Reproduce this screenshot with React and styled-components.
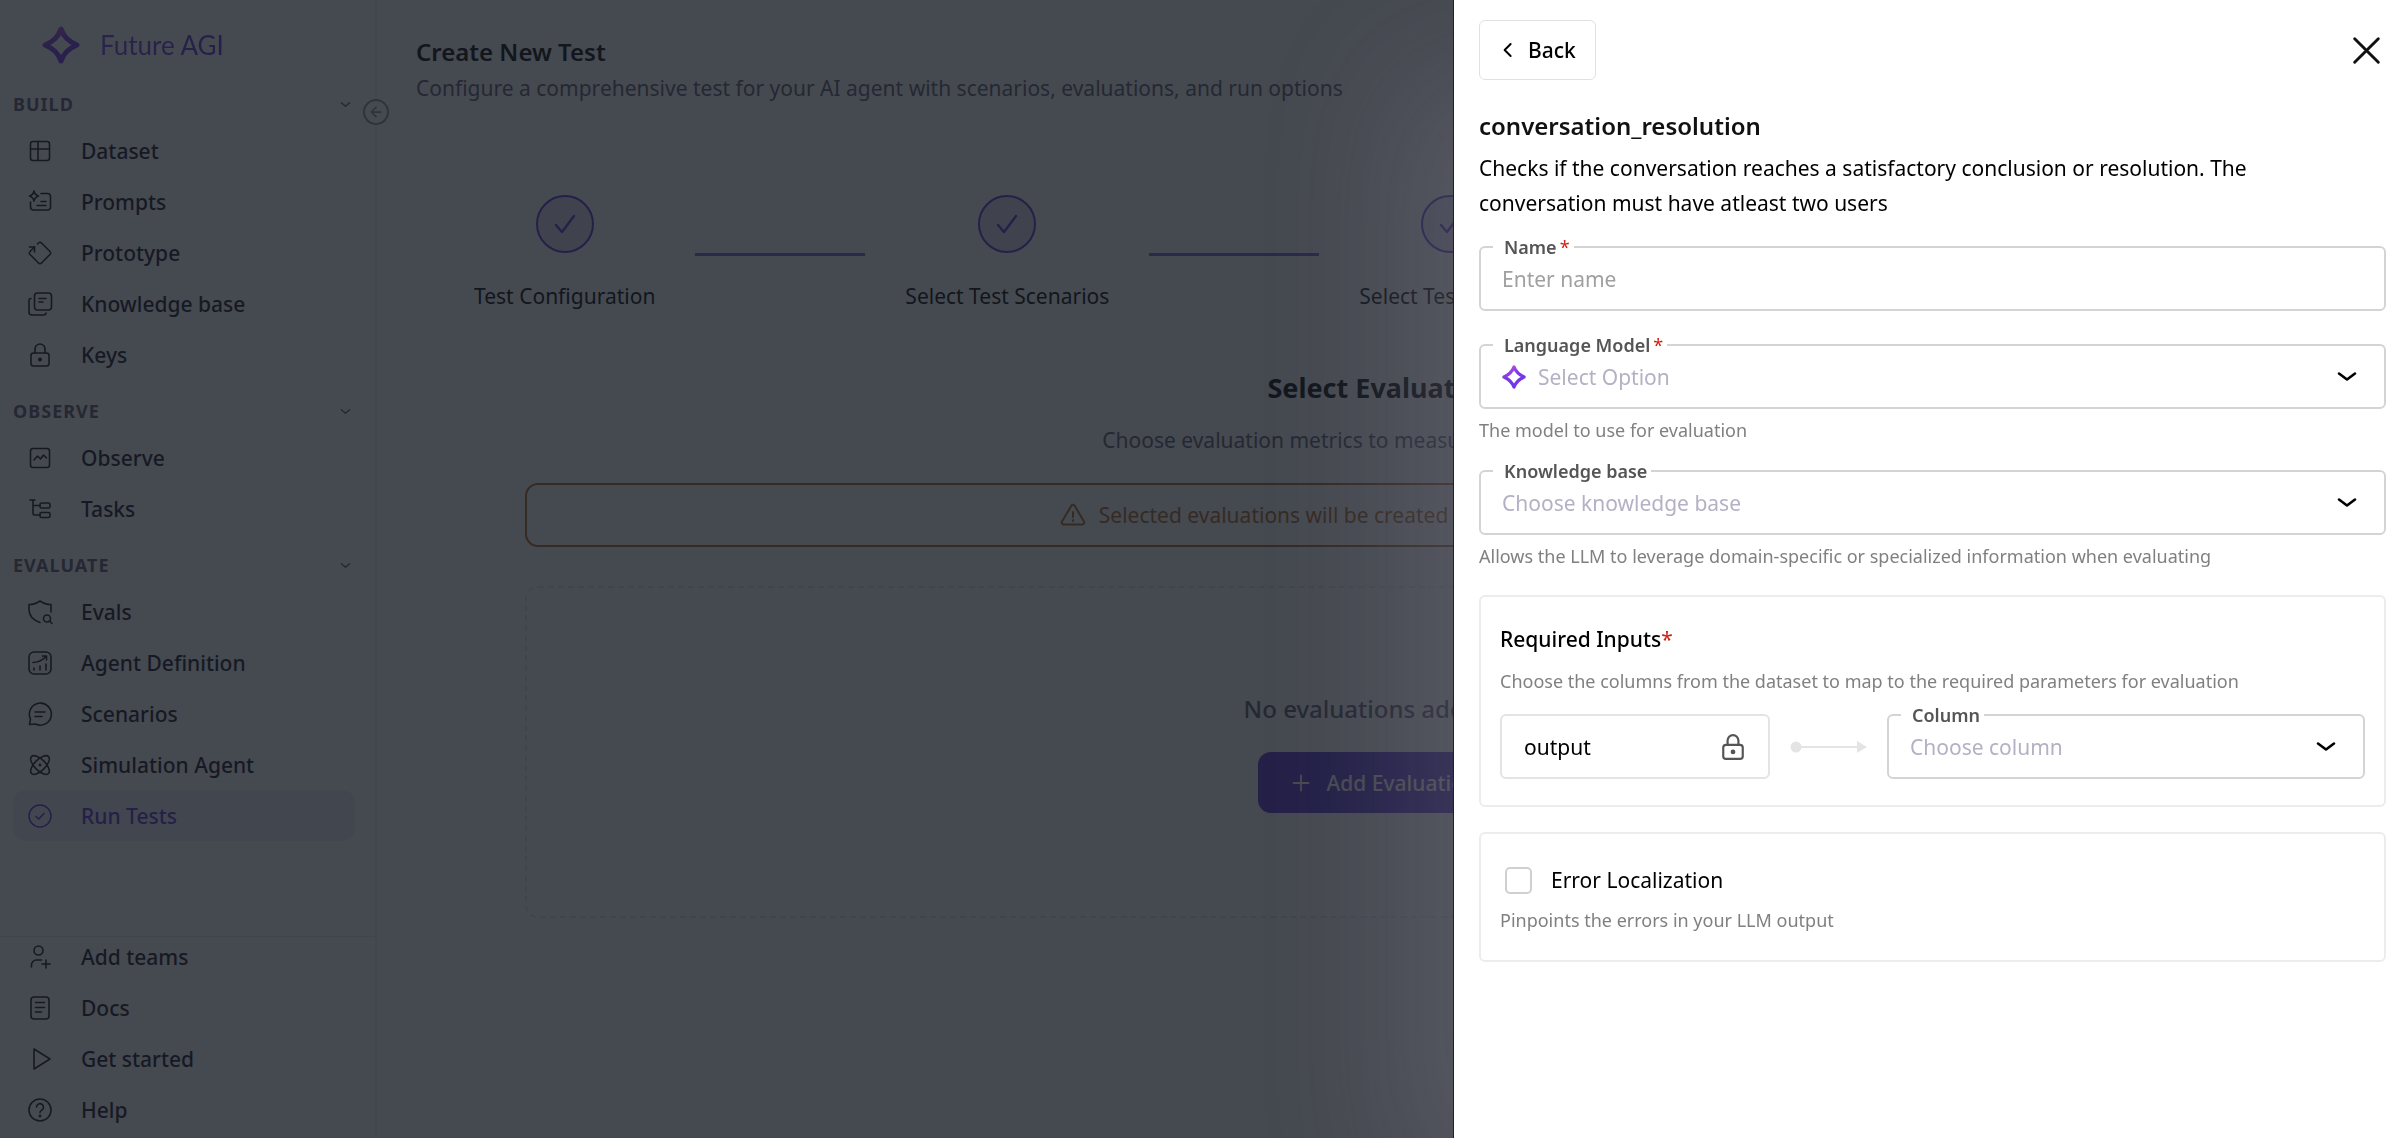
import React, { useState } from "react";
import styled, { createGlobalStyle } from "styled-components";

const icons = {
  dataset: (
    <>
      <rect x="2.5" y="2.5" width="19" height="19" rx="2.5" />
      <path d="M2.5 10h19M10 2.5v19" />
    </>
  ),
  prompts: (
    <>
      <path d="M13 3.5h6.5a3 3 0 0 1 3 3V17a3 3 0 0 1-3 3h-14a3 3 0 0 1-3-3v-5" />
      <path d="M6 1c.5 3 1.500 4 4.500 5-3 1-4 2-4.500 5C5.500 8 4.500 7 1.500 6 4.500 5 5.500 4 6 1Z" />
      <path d="M13 11.500h5M9 15.500h9" />
    </>
  ),
  prototype: (
    <>
      <path d="M9.500 3 10.500 2a2 2 0 0 1 3 0l8.500 8.500a2 2 0 0 1 0 3L13.500 22a2 2 0 0 1-3 0L2 13.500a2 2 0 0 1 0-3L6.500 6" />
      <path d="M1.500 6h5v5" />
    </>
  ),
  knowledge: (
    <>
      <rect x="6.500" y="1" width="17" height="17" rx="3" />
      <path d="M3 6.500c-1.500 0-2 .8-2 2V20a3 3 0 0 0 3 3h11.500c1.500 0 2.500-.8 2.500-2" />
      <path d="M11 6.500h7M11 10h4" />
    </>
  ),
  lock: (
    <>
      <rect x="3" y="10" width="18" height="13" rx="2.500" />
      <path d="M7 10V6a5 5 0 0 1 10 0v4" />
      <circle cx="12" cy="16.500" r="1.200" fill="currentColor" />
    </>
  ),
  observe: (
    <>
      <rect x="2.500" y="2.500" width="19" height="19" rx="2.500" />
      <path d="m6 14 3.500-4 3 3 3-4 3 3" />
    </>
  ),
  tasks: (
    <>
      <path d="M2 3h5M5 3v13.500a1.500 1.500 0 0 0 1.500 1.500H12M5 8.500h7" />
      <rect x="12" y="6" width="10" height="5" rx="1.500" />
      <rect x="12" y="15.500" width="10" height="5" rx="1.500" />
    </>
  ),
  evals: (
    <>
      <path d="M12 22.500C5 20 1 15.500 1 9.500V4.500c4 0 7.500-1 11-3.500 3.500 2.500 7 3.500 11 3.500V12" />
      <circle cx="19" cy="18.500" r="3.500" />
      <path d="m21.500 21 2.500 2.500" />
    </>
  ),
  agent: (
    <>
      <rect x="1" y="1" width="22" height="22" rx="5" />
      <path d="M5 11.500c5 0 9-2 13-6M14.500 5h4v4M6 17v2M12 15v4M18 13v6" />
    </>
  ),
  scenarios: (
    <>
      <path d="M1.500 22.500 2.500 17A11 11 0 1 1 7.500 22Z" />
      <path d="M7 10h10M7 14.500h7" />
    </>
  ),
  atom: (
    <>
      <ellipse cx="12" cy="12" rx="12" ry="5.500" transform="rotate(45 12 12)" />
      <ellipse cx="12" cy="12" rx="12" ry="5.500" transform="rotate(-45 12 12)" />
      <circle cx="12" cy="12" r=".6" fill="currentColor" />
    </>
  ),
  check: (
    <>
      <circle cx="12" cy="12" r="11" />
      <path d="m8 12.500 2.800 2.500L16 9.500" />
    </>
  ),
  team: (
    <>
      <circle cx="10.500" cy="5.500" r="4.500" />
      <path d="M3.500 22v-2a5 5 0 0 1 5-5h5M18 15v8M14 19h8" />
    </>
  ),
  docs: (
    <>
      <rect x="3" y="1" width="18" height="22" rx="3" />
      <path d="M7.500 6.500h9M7.500 11.500h9M7.500 16h6" />
    </>
  ),
  play: <path d="M6 2v20l16-10Z" />,
  help: (
    <>
      <circle cx="12" cy="12" r="11" />
      <path d="M8.500 9a3.500 3.500 0 1 1 5.500 3c-1.200.8-2 1.200-2 2.500" />
      <circle cx="12" cy="18" r=".6" fill="currentColor" />
    </>
  ),
  arrowLeft: <path d="M20 12H5M12 4l-8 8 8 8" />,
  caret: <path d="m3 8 9 8 9-8" />,
  chevronDown: <path d="m4 8.500 8 6 8-6" />,
  chevronLeft: <path d="m15.500 4-8 8 8 8" />,
  tick: <path d="m3 13 6 7L21 4" />,
  plus: <path d="M12 2v20M2 12h20" />,
  close: <path d="m1.500 1.500 21 21M22.500 1.500l-21 21" />,
  warning: (
    <>
      <path d="M10.500 2.500a2 2 0 0 1 3 0l9.500 16a2 2 0 0 1-1.500 3h-19a2 2 0 0 1-1.500-3Z" />
      <path d="M12 9v5M12 17v1" />
    </>
  ),
};

function Icon({ name, size = 24, weight = 2 }) {
  return (
    <svg
      width={size}
      height={size}
      viewBox="0 0 24 24"
      fill="none"
      stroke="currentColor"
      strokeWidth={weight}
      strokeLinecap="round"
      strokeLinejoin="round"
      overflow="visible"
      aria-hidden="true"
    >
      {icons[name]}
    </svg>
  );
}

function Spark({ size, id }) {
  return (
    <svg width={size} height={size} viewBox="0 0 38 38" fill="none" aria-hidden="true">
      <defs>
        <linearGradient id={id} x1="8" y1="0" x2="24" y2="38" gradientUnits="userSpaceOnUse">
          <stop offset="0" stopColor="#c056d8" />
          <stop offset=".45" stopColor="#7a38e8" />
          <stop offset="1" stopColor="#6f35ee" />
        </linearGradient>
      </defs>
      <path
        d="M19 3c3 8 7 12 16 16-9 4-13 8-16 16-3-8-7-12-16-16 9-4 13-8 16-16Z"
        stroke={`url(#${id})`}
        strokeWidth="5"
        strokeLinejoin="round"
      />
    </svg>
  );
}

const sections = [
  {
    title: "BUILD",
    items: [
      ["dataset", "Dataset"],
      ["prompts", "Prompts"],
      ["prototype", "Prototype"],
      ["knowledge", "Knowledge base"],
      ["lock", "Keys"],
    ],
  },
  {
    title: "OBSERVE",
    items: [
      ["observe", "Observe"],
      ["tasks", "Tasks"],
    ],
  },
  {
    title: "EVALUATE",
    items: [
      ["evals", "Evals"],
      ["agent", "Agent Definition"],
      ["scenarios", "Scenarios"],
      ["atom", "Simulation Agent"],
      ["check", "Run Tests"],
    ],
  },
];

const footerItems = [
  ["team", "Add teams"],
  ["docs", "Docs"],
  ["play", "Get started"],
  ["help", "Help"],
];

const steps = [
  "Test Configuration",
  "Select Test Scenarios",
  "Select Test Metrics",
  "Summary",
];

function Sidebar() {
  return (
    <StyledSidebar>
      <StyledLogo>
        <Spark size={38} id="logo" />
        <StyledLogoText>Future AGI</StyledLogoText>
      </StyledLogo>
      <StyledCollapse type="button" aria-label="Collapse sidebar">
        <Icon name="arrowLeft" size={14} weight={3} />
      </StyledCollapse>
      <nav>
        {sections.map((section) => (
          <div key={section.title}>
            <StyledSection type="button">
              {section.title}
              <Icon name="caret" size={11} weight={3} />
            </StyledSection>
            {section.items.map(([icon, label]) => (
              <StyledNavItem href="#" key={label} $active={label === "Run Tests"}>
                <Icon name={icon} weight={icon === "check" ? 1.5 : 1.6} />
                {label}
              </StyledNavItem>
            ))}
          </div>
        ))}
      </nav>
      <StyledSidebarFooter>
        {footerItems.map(([icon, label]) => (
          <StyledFooterItem href="#" key={label}>
            <Icon name={icon} weight={1.6} />
            {label}
          </StyledFooterItem>
        ))}
      </StyledSidebarFooter>
    </StyledSidebar>
  );
}

function TestPage() {
  return (
    <StyledMain>
      <StyledPageTitle>Create New Test</StyledPageTitle>
      <StyledPageText>
        Configure a comprehensive test for your AI agent with scenarios,
        evaluations, and run options
      </StyledPageText>
      <StyledStepper>
        {steps.map((step, index) => (
          <React.Fragment key={step}>
            {index > 0 && <StyledStepLine />}
            <StyledStep>
              <StyledStepCircle>
                <Icon name="tick" weight={2.4} />
              </StyledStepCircle>
              {step}
            </StyledStep>
          </React.Fragment>
        ))}
      </StyledStepper>
      <StyledEvaluations>
        <StyledEvalTitle>Select Evaluations</StyledEvalTitle>
        <StyledPageText>
          Choose evaluation metrics to measure agent performance
        </StyledPageText>
        <StyledAlert>
          <Icon name="warning" />
          Selected evaluations will be created and added to your test run
        </StyledAlert>
        <StyledEmpty>
          <StyledEmptyText>No evaluations added yet</StyledEmptyText>
          <StyledAddButton type="button">
            <Icon name="plus" size={18} weight={2.4} />
            Add Evaluations
          </StyledAddButton>
        </StyledEmpty>
      </StyledEvaluations>
    </StyledMain>
  );
}

function SelectField({ id, label, placeholder, required, icon }) {
  return (
    <StyledField>
      <StyledLegend>
        <label htmlFor={id}>{label}</label>
        {required && <StyledStar>*</StyledStar>}
      </StyledLegend>
      <StyledControl>
        {icon}
        <StyledSelect id={id} defaultValue="">
          <option value="">{placeholder}</option>
        </StyledSelect>
        <Icon name="chevronDown" size={24} weight={2.6} />
      </StyledControl>
    </StyledField>
  );
}

function EvaluationDrawer() {
  const [name, setName] = useState("");
  const [localize, setLocalize] = useState(false);

  return (
    <StyledDrawer>
      <StyledDrawerHeader>
        <StyledBack type="button">
          <Icon name="chevronLeft" size={18} weight={2.6} />
          Back
        </StyledBack>
        <StyledClose type="button" aria-label="Close">
          <Icon name="close" size={27} weight={2.6} />
        </StyledClose>
      </StyledDrawerHeader>
      <StyledDrawerTitle>conversation_resolution</StyledDrawerTitle>
      <StyledDescription>
        Checks if the conversation reaches a satisfactory conclusion or
        resolution. The conversation must have atleast two users
      </StyledDescription>
      <StyledField>
        <StyledLegend>
          <label htmlFor="name">Name</label>
          <StyledStar>*</StyledStar>
        </StyledLegend>
        <StyledControl>
          <StyledInput
            id="name"
            type="text"
            placeholder="Enter name"
            value={name}
            onChange={(e) => setName(e.target.value)}
          />
        </StyledControl>
      </StyledField>
      <StyledGap />
      <SelectField
        id="model"
        label="Language Model"
        placeholder="Select Option"
        required
        icon={<Spark size={24} id="model-spark" />}
      />
      <StyledHelper>The model to use for evaluation</StyledHelper>
      <StyledGap $small />
      <SelectField
        id="knowledge"
        label="Knowledge base"
        placeholder="Choose knowledge base"
      />
      <StyledHelper>
        Allows the LLM to leverage domain-specific or specialized information
        when evaluating
      </StyledHelper>
      <StyledCard>
        <StyledCardTitle>
          Required Inputs<StyledTitleStar>*</StyledTitleStar>
        </StyledCardTitle>
        <StyledCardText>
          Choose the columns from the dataset to map to the required parameters
          for evaluation
        </StyledCardText>
        <StyledMapping>
          <StyledOutput>
            <StyledInput aria-label="Parameter" value="output" readOnly />
            <Icon name="lock" size={26} />
          </StyledOutput>
          <StyledConnector width="77" height="12" viewBox="0 0 77 12" aria-hidden="true">
            <circle cx="6" cy="6" r="5.500" />
            <path d="M6 5h62v2H6z" />
            <path d="m67 0 10 6-10 6z" />
          </StyledConnector>
          <SelectField id="column" label="Column" placeholder="Choose column" />
        </StyledMapping>
      </StyledCard>
      <StyledCard>
        <StyledCheckLabel>
          <StyledCheckbox
            type="checkbox"
            checked={localize}
            onChange={(e) => setLocalize(e.target.checked)}
          />
          Error Localization
        </StyledCheckLabel>
        <StyledCheckText>Pinpoints the errors in your LLM output</StyledCheckText>
      </StyledCard>
    </StyledDrawer>
  );
}

export default function App() {
  return (
    <StyledApp>
      <GlobalStyle />
      <Sidebar />
      <TestPage />
      <StyledBackdrop />
      <EvaluationDrawer />
    </StyledApp>
  );
}

const GlobalStyle = createGlobalStyle`
  * {
    box-sizing: border-box;
  }
  body {
    margin: 0;
    background: #fff;
    color: #000;
    font-family: "Noto Sans", sans-serif;
    font-size: 21px;
    line-height: 32px;
  }
  button, input, select {
    font: inherit;
    color: inherit;
  }
  h1, h2, h3, p {
    margin: 0;
  }
  svg {
    flex: none;
  }
`;
const StyledApp = styled.div`
  display: flex;
  min-height: 100vh;
  overflow: hidden;
`;
const StyledSidebar = styled.aside`
  position: relative;
  display: flex;
  flex-direction: column;
  flex: none;
  width: 377px;
  border-right: 2px solid #f0f0f3;
`;
const StyledLogo = styled.div`
  display: flex;
  align-items: center;
  gap: 20px;
  height: 73px;
  padding: 17px 0 0 42px;
`;
const StyledLogoText = styled.span`
  font-family: Lato, sans-serif;
  font-size: 26px;
  background: linear-gradient(90deg, #7a45e5, #5a35dd);
  background-clip: text;
  color: transparent;
`;
const StyledCollapse = styled.button`
  position: absolute;
  top: 99px;
  right: -14px;
  display: flex;
  align-items: center;
  justify-content: center;
  width: 26px;
  height: 26px;
  padding: 0;
  border: 2px solid #938fa3;
  border-radius: 50%;
  background: #fff;
  color: #938fa3;
`;
const StyledSection = styled.button`
  display: flex;
  align-items: center;
  justify-content: space-between;
  width: 100%;
  height: 52px;
  padding: 10px 24px 0 13px;
  border: none;
  background: none;
  color: #605c70;
  font-size: 18px;
  font-weight: 700;
  letter-spacing: 1px;
`;
const StyledNavItem = styled.a`
  display: flex;
  align-items: center;
  gap: 29px;
  height: 51px;
  margin: 0 20px 0 13px;
  padding-left: 15px;
  border-radius: 13px;
  background: ${(props) => (props.$active ? "#f0eff6" : "none")};
  color: ${(props) => (props.$active ? "#5a35d5" : "#17131f")};
  font-weight: 500;
  text-decoration: none;
`;
const StyledSidebarFooter = styled.div`
  display: flex;
  flex-direction: column;
  gap: 11px;
  margin-top: auto;
  padding-bottom: 8px;
  border-top: 1px solid #e6e6ea;
`;
const StyledFooterItem = styled(StyledNavItem)`
  height: 40px;
`;
const StyledMain = styled.main`
  flex: 1;
  padding: 36px 39px;
`;
const StyledPageTitle = styled.h1`
  font-size: 24px;
  font-weight: 600;
  line-height: 32px;
`;
const StyledPageText = styled.p`
  margin-top: 4px;
  color: #605c70;
`;
const StyledStepper = styled.div`
  display: flex;
  align-items: flex-start;
  gap: 40px;
  margin-top: 91px;
  padding-left: 58px;
`;
const StyledStep = styled.div`
  display: flex;
  flex-direction: column;
  align-items: center;
  gap: 27px;
  white-space: nowrap;
`;
const StyledStepCircle = styled.div`
  display: flex;
  align-items: center;
  justify-content: center;
  width: 58px;
  height: 58px;
  border: 2px solid #5a35d5;
  border-radius: 50%;
  background: #e4dff5;
  color: #5a35d5;
`;
const StyledStepLine = styled.div`
  width: 170px;
  height: 3px;
  margin-top: 58px;
  background: #7a5fe0;
`;
const StyledEvaluations = styled.section`
  display: flex;
  flex-direction: column;
  align-items: center;
  max-width: 1730px;
  margin: 56px auto 0;
`;
const StyledEvalTitle = styled.h2`
  margin-bottom: 12px;
  font-size: 27px;
  font-weight: 700;
  line-height: 40px;
`;
const StyledAlert = styled.div`
  display: flex;
  align-items: center;
  justify-content: center;
  gap: 14px;
  width: 100%;
  height: 64px;
  margin-top: 27px;
  border: 2px solid #b06820;
  border-radius: 13px;
  color: #b06820;
`;
const StyledEmpty = styled.div`
  display: flex;
  flex-direction: column;
  align-items: center;
  justify-content: center;
  gap: 27px;
  width: 100%;
  height: 332px;
  margin-top: 39px;
  padding-top: 2px;
  border: 2px dashed #e8e6f0;
  border-radius: 13px;
`;
const StyledEmptyText = styled.p`
  color: #605c70;
  font-size: 24px;
  font-weight: 500;
`;
const StyledAddButton = styled.button`
  display: flex;
  align-items: center;
  gap: 17px;
  height: 61px;
  padding: 0 34px;
  border: none;
  border-radius: 13px;
  background: #5a35d5;
  color: #fff;
  font-weight: 500;
`;
const StyledBackdrop = styled.div`
  position: fixed;
  inset: 0;
  background: rgba(22, 28, 36, 0.8);
`;
const StyledDrawer = styled.aside`
  position: fixed;
  top: 0;
  right: 0;
  bottom: 0;
  width: 949px;
  max-width: 100vw;
  padding: 20px 16px 20px 25px;
  border-left: 1px solid #1c1c40;
  overflow-y: auto;
  background: #fff;
  box-shadow: -64px 64px 128px -13px rgba(145, 140, 160, 0.24);
`;
const StyledDrawerHeader = styled.header`
  display: flex;
  align-items: center;
  justify-content: space-between;
`;
const StyledBack = styled.button`
  display: flex;
  align-items: center;
  gap: 11px;
  height: 60px;
  padding: 0 19px;
  border: 1px solid #e1e1e1;
  border-radius: 6px;
  background: #fff;
  font-weight: 500;
`;
const StyledClose = styled.button`
  display: flex;
  padding: 6px;
  border: none;
  background: none;
  color: #111;
`;
const StyledDrawerTitle = styled.h2`
  margin-top: 30px;
  color: #111;
  font-size: 24px;
  font-weight: 600;
  line-height: 32px;
`;
const StyledDescription = styled.p`
  margin: 9px 0 16px;
  padding-right: 80px;
  line-height: 35px;
`;
const StyledField = styled.fieldset`
  flex: 1;
  min-width: 0;
  margin: 0;
  padding: 0 21px 9px;
  border: 2px solid #d4d4d4;
  border-radius: 6px;
`;
const StyledLegend = styled.legend`
  margin-left: -9px;
  padding: 0 4px 0 11px;
  color: #555;
  font-size: 18px;
  font-weight: 600;
  line-height: 20px;
`;
const StyledStar = styled.span`
  padding-left: 3px;
  color: #cf1f12;
  font-weight: 400;
`;
const StyledTitleStar = styled(StyledStar)`
  padding-left: 0;
`;
const StyledControl = styled.div`
  display: flex;
  align-items: center;
  gap: 12px;
  height: 43px;
  padding-right: 4px;
`;
const StyledInput = styled.input`
  flex: 1;
  min-width: 0;
  padding: 0;
  border: none;
  outline: none;
  background: none;
  &::placeholder {
    color: #a0a0a0;
  }
`;
const StyledSelect = styled.select`
  flex: 1;
  min-width: 0;
  padding: 0;
  border: none;
  outline: none;
  appearance: none;
  background: none;
  color: #b4b1c4;
`;
const StyledGap = styled.div`
  height: ${(props) => (props.$small ? "17px" : "24px")};
`;
const StyledHelper = styled.p`
  margin-top: 7px;
  color: #808080;
  font-size: 18px;
  line-height: 28px;
`;
const StyledCard = styled.section`
  margin-top: 25px;
  padding: 26px 19px;
  border: 2px solid #ececec;
  border-radius: 6px;
`;
const StyledCardTitle = styled.h3`
  font-size: 21px;
  font-weight: 500;
`;
const StyledCardText = styled(StyledHelper)`
  margin: 12px 0 10px;
`;
const StyledMapping = styled.div`
  display: flex;
  align-items: flex-end;
  gap: 20px;
`;
const StyledOutput = styled.div`
  display: flex;
  align-items: center;
  width: 270px;
  height: 65px;
  padding: 0 22px;
  border: 2px solid #e4e4e4;
  border-radius: 6px;
  svg {
    color: #555;
  }
`;
const StyledConnector = styled.svg`
  margin-bottom: 26px;
  fill: #e4e4e4;
`;
const StyledCheckLabel = styled.label`
  display: flex;
  align-items: center;
  gap: 19px;
  height: 40px;
  padding-left: 5px;
`;
const StyledCheckbox = styled.input`
  width: 27px;
  height: 27px;
  margin: 0;
  border: 2px solid #d0d0d0;
  border-radius: 5px;
  appearance: none;
  &:checked {
    background: #5a35d5;
  }
`;
const StyledCheckText = styled(StyledHelper)`
  margin-top: 6px;
`;
